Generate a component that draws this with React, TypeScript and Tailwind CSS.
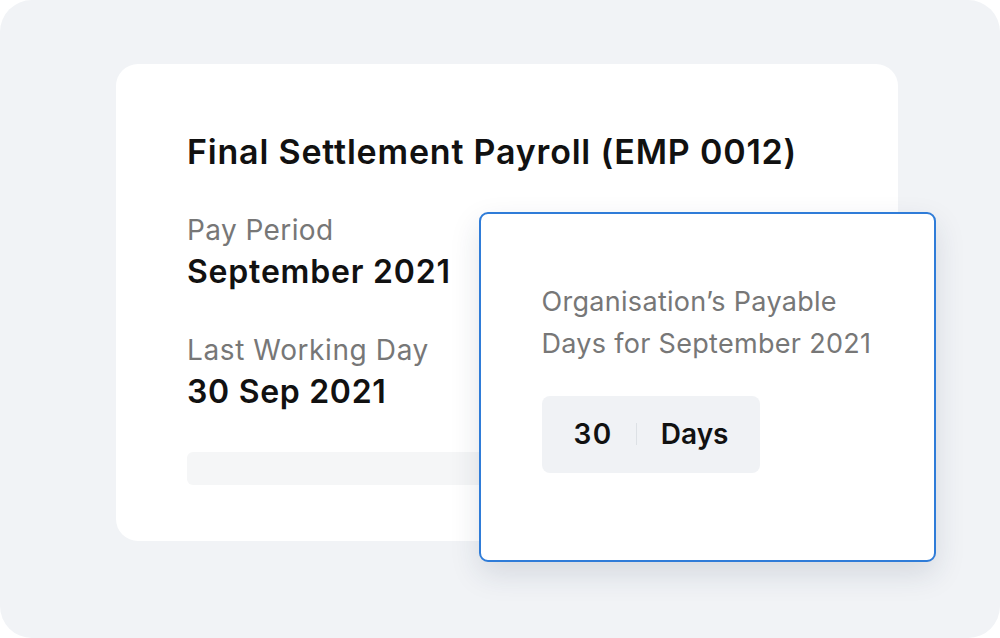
import React from "react";

export default function App() {
  const font = { fontFamily: "Inter, 'Noto Sans', sans-serif" };
  return (
    <div className="w-[1000px] h-[638px] bg-white">
      <div
        className="relative w-[1000px] h-[638px] bg-[#f1f3f6] rounded-[32px] pt-[64px] pl-[116px]"
        style={font}
      >
        <div className="w-[782px] h-[477px] bg-white rounded-[22px] pl-[71px] pt-[62px]">
          <h1 className="text-[34px] leading-[52px] font-semibold text-[#111] tracking-[0.8px]">
            Final Settlement Payroll (EMP 0012)
          </h1>
          <div className="mt-[34px] text-[28px] leading-[36px] text-[#777] tracking-[0.4px]">
            Pay Period
          </div>
          <div className="mt-[6px] text-[32px] leading-[36px] font-semibold text-[#111] tracking-[0.8px]">
            September 2021
          </div>
          <div className="mt-[42px] text-[28px] leading-[36px] text-[#777] tracking-[0.6px]">
            Last Working Day
          </div>
          <div className="mt-[6px] text-[32px] leading-[36px] font-semibold text-[#111] tracking-[0.7px]">
            30 Sep 2021
          </div>
          <div className="mt-[42px] w-[400px] h-[33px] bg-[#f5f6f7] rounded-[6px]" />
        </div>

        <div className="absolute left-[479px] top-[212px] w-[457px] h-[350px] bg-white border-[2.5px] border-[#2f7cd8] rounded-[9px] shadow-[0_12px_30px_rgba(30,50,80,0.13)] pl-[60.5px] pt-[66.5px]">
          <div className="text-[27px] leading-[42px] text-[#777] tracking-[0.3px]">
            Organisation’s Payable
            <br />
            Days for September 2021
          </div>
          <div className="mt-[31px] w-[218px] h-[77px] bg-[#f0f2f5] rounded-[8px] flex items-center pl-[32px]">
            <span className="text-[28px] font-semibold text-[#111] tracking-[1.5px]">30</span>
            <span className="ml-[23px] mr-[24px] w-[1px] h-[22px] bg-[#dde1e5]" />
            <span className="text-[28px] font-semibold text-[#111]">Days</span>
          </div>
        </div>
      </div>
    </div>
  );
}
